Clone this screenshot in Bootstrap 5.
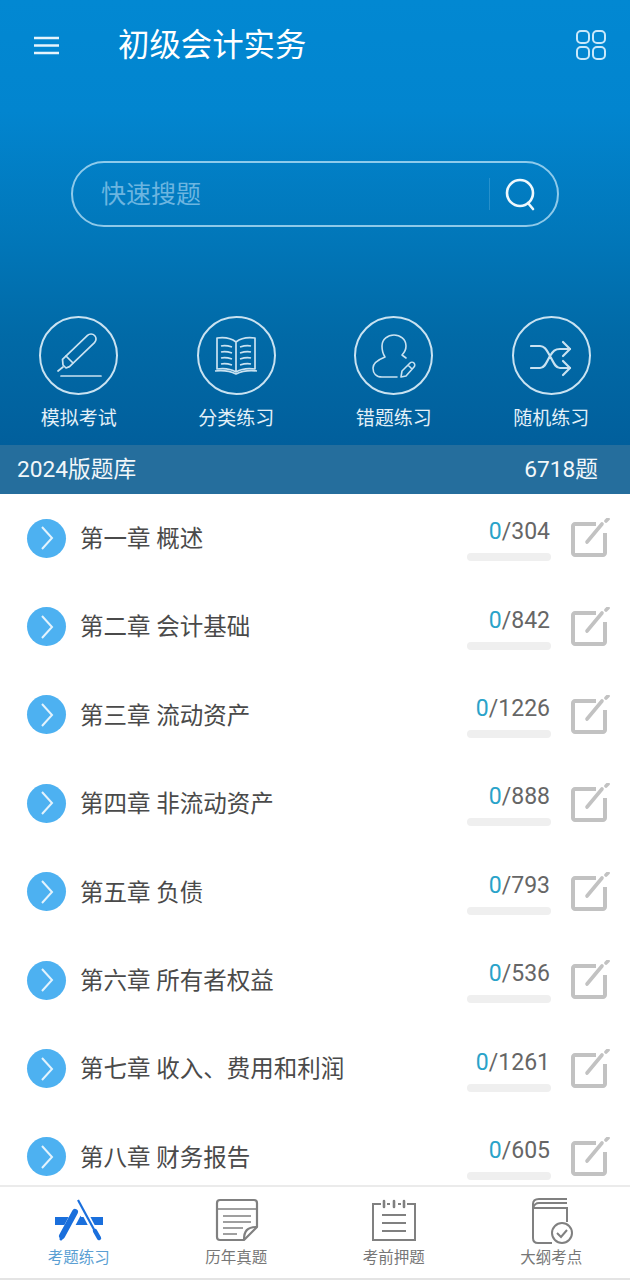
<!DOCTYPE html>
<html lang="zh-CN">
<head>
  <meta charset="UTF-8"/>
  <meta name="viewport" content="width=device-width, initial-scale=1.0"/>
  <title>初级会计实务</title>
  <link href="https://cdn.jsdelivr.net/npm/bootstrap@5.3.0/dist/css/bootstrap.min.css" rel="stylesheet"/>
  <style>
    body {
      font-family: Roboto, "Noto Sans CJK SC", sans-serif;
      background: #fff;
    }
    .app-shell {
      height: 1280px;
      overflow: hidden;
    }
    .hero {
      height: 445px;
      background: linear-gradient(180deg, #0288d2 0%, #0285cf 25%, #0176b8 55%, #016aa7 75%, #015f9c 100%);
      color: #fff;
    }
    .top-bar {
      height: 90px;
      padding: 0 24px 0 34px;
    }
    .app-title {
      font-size: 31.4px;
      margin: 2px 0 0 59px;
      font-weight: 400;
      line-height: 1;
    }
    .search-box {
      width: 488px;
      height: 66px;
      margin: 71px 0 0 71px;
      border: 2px solid rgba(190, 228, 248, .75);
      border-radius: 33px;
      padding: 0 20px 0 28px;
    }
    .search-hint {
      font-size: 25px;
      color: #6cb5e0;
      line-height: 1;
    }
    .search-split {
      width: 1px;
      height: 32px;
      background: rgba(190, 228, 248, .2);
      margin-right: 15px;
    }
    .entry-row {
      margin-top: 89px;
    }
    .entry-ring {
      width: 79px;
      height: 79px;
      border: 2px solid #c9e2f1;
      border-radius: 50%;
    }
    .entry-label {
      font-size: 19px;
      line-height: 1;
      margin-top: 14px;
      color: #e3f0f8;
    }
    .count-band {
      height: 49px;
      background: #256e9d;
      color: #f2f7fa;
      font-size: 22.7px;
      line-height: 1;
      padding: 2px 32px 0 17px;
    }
    .chapter-list {
      min-height: 0;
      overflow: hidden;
    }
    .chapter-row {
      height: 88.4px;
      padding-left: 27px;
      flex: none;
    }
    .go-dot {
      width: 39px;
      height: 39px;
      background: #4db1f1;
      border-radius: 50%;
      flex: none;
    }
    .chapter-name {
      font-size: 23.5px;
      color: #4a4a4a;
      margin: 3px 0 0 14px;
      line-height: 1;
    }
    .chapter-stat {
      width: 84px;
      margin-right: 20px;
      margin-top: 5px;
    }
    .stat-text {
      font-size: 23px;
      line-height: 1;
      color: #666;
      text-align: right;
      padding-right: 1px;
    }
    .stat-done {
      color: #2aa3c9;
    }
    .stat-track {
      height: 8px;
      margin-top: 10px;
      background: #efefef;
      border-radius: 4px;
    }
    .edit-icon {
      margin-right: 19px;
    }
    .tab-bar {
      height: 95px;
      flex: none;
      border-top: 2px solid #ebebeb;
      border-bottom: 2px solid #e4e4e4;
      background: #fff;
    }
    .tab-item {
      width: 25%;
      padding-top: 11px;
      color: #777;
    }
    .tab-item svg {
      display: block;
    }
    .tab-name {
      font-size: 15.5px;
      line-height: 1;
      margin-top: 9px;
    }
    .tab-active {
      color: #5b9fd3;
    }
    .tab-nudge {
      margin-left: 2px;
    }
    .tab-book {
      margin-bottom: -2px;
    }
  </style>
</head>
<body>
  <div class="app-shell d-flex flex-column">
    <!-- Header -->
    <div class="hero flex-shrink-0">
      <div class="top-bar d-flex align-items-center">
        <svg width="25" height="19" viewBox="0 0 25 19" fill="none" stroke="#e6f4fc" stroke-width="2.6" aria-hidden="true"><path d="M0 2h25M0 9.5h25M0 17h25"/></svg>
        <h1 class="app-title flex-grow-1">初级会计实务</h1>
        <svg width="30" height="30" viewBox="0 0 30 30" fill="none" stroke="#c9e8fa" stroke-width="2" aria-hidden="true">
          <rect x="1" y="1" width="12" height="12" rx="4"/><rect x="17" y="1" width="12" height="12" rx="4"/>
          <rect x="1" y="17" width="12" height="12" rx="4"/><rect x="17" y="17" width="12" height="12" rx="4"/>
        </svg>
      </div>

      <div class="search-box d-flex align-items-center">
        <span class="search-hint flex-grow-1">快速搜题</span>
        <span class="search-split"></span>
        <svg width="32" height="33" viewBox="0 0 32 33" fill="none" stroke="#eef8fd" stroke-width="2.6" stroke-linecap="round" aria-hidden="true"><circle cx="15" cy="15" r="13"/><path d="M23 25l5 6"/></svg>
      </div>

      <div class="entry-row row g-0 text-center">
        <div class="col-3 d-flex flex-column align-items-center">
          <div class="entry-ring d-flex align-items-center justify-content-center">
            <svg width="48" height="48" viewBox="0 0 48 48" fill="none" stroke="#c9e2f1" stroke-width="1.7" stroke-linejoin="round" stroke-linecap="round" aria-hidden="true">
              <path d="M32.5 3.4L7.5 27.4L8 33L11 36L14.5 34.6L39.5 10.6A5 5 0 0 0 32.5 3.4Z"/>
              <path d="M11 24l7 7M8 35l-5 4M6 44h40"/>
            </svg>
          </div>
          <div class="entry-label">模拟考试</div>
        </div>
        <div class="col-3 d-flex flex-column align-items-center">
          <div class="entry-ring d-flex align-items-center justify-content-center">
            <svg width="44" height="40" viewBox="0 0 44 40" fill="none" stroke="#c9e2f1" stroke-width="1.7" stroke-linejoin="round" aria-hidden="true">
              <path d="M22 6C17 2 10 1 3 2v31c7-1 14 0 19 3 5-3 12-4 19-3V2c-7-1-14 0-19 4zM22 6v30"/>
              <path d="M7 10c4-1 8 0 11 1M7 16c4-1 8 0 11 1M7 22c4-1 8 0 11 1M7 28c4-1 8 0 11 1M26 11c3-1 7-2 11-1M26 17c3-1 7-2 11-1M26 23c3-1 7-2 11-1M26 29c3-1 7-2 11-1"/>
              <path d="M1 35c8-1 15 0 21 3 6-3 13-4 21-3"/>
            </svg>
          </div>
          <div class="entry-label">分类练习</div>
        </div>
        <div class="col-3 d-flex flex-column align-items-center">
          <div class="entry-ring d-flex align-items-center justify-content-center">
            <svg width="46" height="46" viewBox="0 0 46 46" fill="none" stroke="#c9e2f1" stroke-width="1.6" stroke-linejoin="round" stroke-linecap="round" aria-hidden="true">
              <path d="M26 44H11C5 44 2 40 2 35c0-5 7-9 12-11-2-3-3-6-3-11C11 6 17 2 23 2s12 4 12 11c0 4-2 7-4 9l4 3"/>
              <path d="M30 44l1-6 8-8c1-1 3-1 4 0s1 3 0 4l-8 9zM37 32l4 4"/>
            </svg>
          </div>
          <div class="entry-label">错题练习</div>
        </div>
        <div class="col-3 d-flex flex-column align-items-center">
          <div class="entry-ring d-flex align-items-center justify-content-center">
            <svg width="42" height="42" viewBox="0 0 42 42" fill="none" stroke="#c9e2f1" stroke-width="2.2" stroke-linejoin="round" stroke-linecap="round" aria-hidden="true">
              <path d="M1 11h9c5 0 7 5 10 10s5 12 10 12h10M1 33h9c5 0 7-7 10-12s5-7 10-7h10"/>
              <path d="M33 7l7 7-7 7M33 26l7 7-7 7"/>
            </svg>
          </div>
          <div class="entry-label">随机练习</div>
        </div>
      </div>
    </div>

    <div class="count-band d-flex align-items-center justify-content-between flex-shrink-0">
      <span>2024版题库</span>
      <span>6718题</span>
    </div>

    <!-- Chapters, filled by script below -->
    <div class="chapter-list flex-grow-1 d-flex flex-column" id="chapterList"></div>

    <!-- Bottom tabs -->
    <div class="tab-bar d-flex">
      <div class="tab-item tab-active d-flex flex-column align-items-center">
        <svg width="50" height="44" viewBox="0 0 50 44" aria-hidden="true">
          <rect x="1" y="19" width="48" height="8" fill="#1a6fdc"/>
          <path d="M24 15l10 12H14z" fill="#1a6fdc"/>
          <path d="M24 12L8 42" stroke="#fff" stroke-width="10"/>
          <path d="M24 2l19 36" stroke="#fff" stroke-width="6"/>
          <path d="M21 14L8 38" stroke="#1a6fdc" stroke-width="6" stroke-linecap="round"/>
          <path d="M7 41l1-3" stroke="#1a6fdc" stroke-width="3" stroke-linecap="round"/>
          <path d="M24 2l19 35" stroke="#1a6fdc" stroke-width="2.2"/>
          <path d="M41 33l4 7" stroke="#1a6fdc" stroke-width="4.4" stroke-linecap="round"/>
        </svg>
        <div class="tab-name">考题练习</div>
      </div>
      <div class="tab-item d-flex flex-column align-items-center">
        <svg class="tab-nudge" width="44" height="44" viewBox="0 0 44 44" fill="none" stroke="#808080" aria-hidden="true">
          <path d="M29 42H5c-2 0-3-1-3-3V5c0-2 1-3 3-3h34c2 0 3 1 3 3v24z" stroke-width="2.2" stroke-linejoin="round"/>
          <path d="M29 42c0-9 3-13 13-13" stroke-width="2.2"/>
          <path d="M2 11h40M8 18h28M8 24h28M8 30h20M8 36h14" stroke-width="1.6"/>
        </svg>
        <div class="tab-name">历年真题</div>
      </div>
      <div class="tab-item d-flex flex-column align-items-center">
        <svg width="46" height="44" viewBox="0 0 46 44" fill="none" stroke="#808080" stroke-width="2" aria-hidden="true">
          <path d="M10 6H2v36h42V6h-8M16 6h3M27 6h3"/>
          <path d="M13 3v6M23 3v6M33 3v6" stroke-width="2.6" stroke-linecap="round"/>
          <path d="M11 17h24M11 25h24M11 33h24"/>
        </svg>
        <div class="tab-name">考前押题</div>
      </div>
      <div class="tab-item d-flex flex-column align-items-center">
        <svg class="tab-book tab-nudge" width="44" height="46" viewBox="0 0 44 46" fill="none" stroke="#808080" stroke-width="2" aria-hidden="true">
          <path d="M37 1H9C5 1 3 3 3 6v34c0 3 2 5 5 5h14"/>
          <path d="M37 5H9C6 5 4 7 3 10M4 10h33v14"/>
          <circle cx="32" cy="35" r="10"/>
          <path d="M27 35l4 4 6-7"/>
        </svg>
        <div class="tab-name">大纲考点</div>
      </div>
    </div>
  </div>

  <script>
    const chapters = [
      ["第一章 概述", 304],
      ["第二章 会计基础", 842],
      ["第三章 流动资产", 1226],
      ["第四章 非流动资产", 888],
      ["第五章 负债", 793],
      ["第六章 所有者权益", 536],
      ["第七章 收入、费用和利润", 1261],
      ["第八章 财务报告", 605]
    ];

    document.getElementById("chapterList").innerHTML = chapters.map(function (c) {
      return `<div class="chapter-row d-flex align-items-center">
        <span class="go-dot d-flex align-items-center justify-content-center">
          <svg width="14" height="24" viewBox="0 0 14 24" fill="none" stroke="#e3f3fd" stroke-width="2"><path d="M2 1l10 11L2 23"/></svg>
        </span>
        <span class="chapter-name flex-grow-1">${c[0]}</span>
        <div class="chapter-stat">
          <div class="stat-text"><span class="stat-done">0</span>/${c[1]}</div>
          <div class="stat-track"></div>
        </div>
        <svg class="edit-icon" width="40" height="40" viewBox="0 0 40 40" fill="none" aria-hidden="true">
          <path d="M25 6H4c-1 0-2 1-2 2v27c0 1 1 2 2 2h28c1 0 2-1 2-2V15" stroke="#c2c2c2" stroke-width="4" stroke-linejoin="round"/>
          <path d="M16 24L31 6" stroke="#c2c2c2" stroke-width="3.6" stroke-linecap="round"/>
          <path d="M35 3l2-2" stroke="#c2c2c2" stroke-width="3.6" stroke-linecap="round"/>
        </svg>
      </div>`;
    }).join("");
  </script>
  <script src="https://cdn.jsdelivr.net/npm/bootstrap@5.3.0/dist/js/bootstrap.bundle.min.js"></script>
</body>
</html>
